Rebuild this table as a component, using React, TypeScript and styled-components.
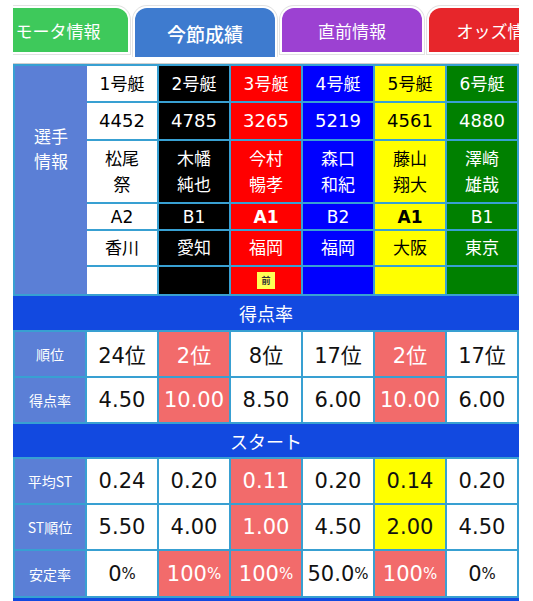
import React from "react";
import styled, { createGlobalStyle, css } from "styled-components";

const Global = createGlobalStyle`
  html, body { margin: 0; padding: 0; background: #fff; }
  body { font-family: "DejaVu Sans", "Noto Sans CJK JP", sans-serif; }
`;

const Page = styled.div`
  width: 506px;
  padding-left: 13px;
`;

const TabBar = styled.div`
  overflow: hidden;
  padding-top: 8px;
  height: 49px;
  margin-bottom: 7px;
`;

const TabTrack = styled.div`
  display: flex;
  align-items: flex-start;
  gap: 7px;
  margin-left: -25px;
`;

const Tab = styled.div<{ $bg: string; $active?: boolean }>`
  flex: 0 0 140px;
  height: ${(p) => (p.$active ? 49 : 44)}px;
  background: ${(p) => p.$bg};
  border-radius: 12px 12px 0 0;
  box-shadow: 0 0 0 2px #fff, 0 0 0 3px #e2e2e2;
  color: #fff;
  display: flex;
  align-items: center;
  justify-content: center;
  font-family: "Noto Sans CJK JP", sans-serif;
  font-size: ${(p) => (p.$active ? 19 : 17)}px;
  font-weight: ${(p) => (p.$active ? 500 : 400)};
  padding-top: ${(p) => (p.$active ? 2 : 0)}px;
  box-sizing: border-box;
  white-space: nowrap;
`;

const Table = styled.div`
  display: grid;
  grid-template-columns: repeat(7, 70px);
  grid-template-rows: 35px 36px 61px 25px 34px 27px 34px 44px 44px 33px 44px 44px 45px 34px;
  gap: 2px;
  padding: 2px;
  background: #38a0d2;
  box-shadow: 0 -1px 0 #cfcfcf;
`;

const SideLabel = styled.div`
  grid-row: 1 / span 6;
  background: #5b7fd6;
  color: #fff;
  display: flex;
  align-items: center;
  justify-content: center;
  text-align: center;
  font-family: "Noto Sans CJK JP", sans-serif;
  font-size: 17px;
  line-height: 25px;
  padding-bottom: 64px;
  margin-right: -2px;
`;

const RowLabel = styled.div`
  background: #5b7fd6;
  color: #fff;
  display: flex;
  align-items: center;
  justify-content: center;
  font-family: "Noto Sans CJK JP", sans-serif;
  font-size: 14px;
`;

const Section = styled.div`
  grid-column: 1 / -1;
  background: #1249e0;
  color: #fff;
  display: flex;
  align-items: center;
  justify-content: center;
  font-family: "Noto Sans CJK JP", sans-serif;
  font-size: 18px;
  margin: 0 -2px;
`;

const BoatCell = styled.div<{ $bg: string; $fg: string; $size?: number; $bold?: boolean }>`
  background: ${(p) => p.$bg};
  color: ${(p) => p.$fg};
  display: flex;
  flex-direction: column;
  align-items: center;
  justify-content: center;
  font-size: ${(p) => p.$size ?? 17}px;
  font-weight: ${(p) => (p.$bold ? 700 : 400)};
  line-height: 26px;
  text-align: center;
`;

const Badge = styled.span`
  display: inline-flex;
  align-items: center;
  justify-content: center;
  width: 18px;
  height: 17px;
  background: #ffff55;
  color: #333;
  font-family: "Noto Sans CJK JP", sans-serif;
  font-size: 9px;
  font-weight: 700;
  line-height: 1;
`;

type Tone = "plain" | "hot" | "gold";

const toneStyles = {
  plain: css`background: #fff; color: #111;`,
  hot: css`background: #f26b6b; color: #fff;`,
  gold: css`background: #ffff00; color: #111;`,
};

const StatCell = styled.div<{ $tone: Tone }>`
  ${(p) => toneStyles[p.$tone]}
  display: flex;
  align-items: center;
  justify-content: center;
  font-size: 21px;
  white-space: nowrap;
`;

const Pct = styled.span`
  font-size: 15px;
`;

const boats = [
  { no: "1号艇", bg: "#ffffff", fg: "#000", id: "4452", name: ["松尾", "祭"], cls: "A2", bold: false, area: "香川", badge: "" },
  { no: "2号艇", bg: "#000000", fg: "#fff", id: "4785", name: ["木幡", "純也"], cls: "B1", bold: false, area: "愛知", badge: "" },
  { no: "3号艇", bg: "#ff0000", fg: "#fff", id: "3265", name: ["今村", "暢孝"], cls: "A1", bold: true, area: "福岡", badge: "前" },
  { no: "4号艇", bg: "#0000ff", fg: "#fff", id: "5219", name: ["森口", "和紀"], cls: "B2", bold: false, area: "福岡", badge: "" },
  { no: "5号艇", bg: "#ffff00", fg: "#000", id: "4561", name: ["藤山", "翔大"], cls: "A1", bold: true, area: "大阪", badge: "" },
  { no: "6号艇", bg: "#008000", fg: "#fff", id: "4880", name: ["澤崎", "雄哉"], cls: "B1", bold: false, area: "東京", badge: "" },
];

type Stat = [string, Tone];

const pointRows: { label: string; values: Stat[] }[] = [
  { label: "順位", values: [["24位", "plain"], ["2位", "hot"], ["8位", "plain"], ["17位", "plain"], ["2位", "hot"], ["17位", "plain"]] },
  { label: "得点率", values: [["4.50", "plain"], ["10.00", "hot"], ["8.50", "plain"], ["6.00", "plain"], ["10.00", "hot"], ["6.00", "plain"]] },
];

const startRows: { label: string; values: Stat[] }[] = [
  { label: "平均ST", values: [["0.24", "plain"], ["0.20", "plain"], ["0.11", "hot"], ["0.20", "plain"], ["0.14", "gold"], ["0.20", "plain"]] },
  { label: "ST順位", values: [["5.50", "plain"], ["4.00", "plain"], ["1.00", "hot"], ["4.50", "plain"], ["2.00", "gold"], ["4.50", "plain"]] },
  { label: "安定率", values: [["0%", "plain"], ["100%", "hot"], ["100%", "hot"], ["50.0%", "plain"], ["100%", "hot"], ["0%", "plain"]] },
];

const renderValue = (v: string) =>
  v.endsWith("%") ? (
    <>
      {v.slice(0, -1)}
      <Pct>%</Pct>
    </>
  ) : (
    v
  );

const StatRows = ({ rows }: { rows: { label: string; values: Stat[] }[] }) => (
  <>
    {rows.map((r) => (
      <React.Fragment key={r.label}>
        <RowLabel>{r.label}</RowLabel>
        {r.values.map(([v, t], i) => (
          <StatCell key={i} $tone={t}>
            {renderValue(v)}
          </StatCell>
        ))}
      </React.Fragment>
    ))}
  </>
);

export default function App() {
  return (
    <Page>
      <Global />
      <TabBar>
        <TabTrack>
          <Tab $bg="#3ec95b">モータ情報</Tab>
          <Tab $bg="#3e7bcf" $active>
            今節成績
          </Tab>
          <Tab $bg="#9c41d2">直前情報</Tab>
          <Tab $bg="#e7262b">オッズ情報</Tab>
        </TabTrack>
      </TabBar>
      <Table>
        <SideLabel>
          選手
          <br />
          情報
        </SideLabel>
        {boats.map((b) => (
          <BoatCell key={b.no} $bg={b.bg} $fg={b.fg}>
            {b.no}
          </BoatCell>
        ))}
        {boats.map((b) => (
          <BoatCell key={b.id} $bg={b.bg} $fg={b.fg} $size={18}>
            {b.id}
          </BoatCell>
        ))}
        {boats.map((b) => (
          <BoatCell key={b.name.join()} $bg={b.bg} $fg={b.fg}>
            <span>{b.name[0]}</span>
            <span>{b.name[1]}</span>
          </BoatCell>
        ))}
        {boats.map((b, i) => (
          <BoatCell key={"c" + i} $bg={b.bg} $fg={b.fg} $bold={b.bold}>
            {b.cls}
          </BoatCell>
        ))}
        {boats.map((b, i) => (
          <BoatCell key={"a" + i} $bg={b.bg} $fg={b.fg}>
            {b.area}
          </BoatCell>
        ))}
        {boats.map((b, i) => (
          <BoatCell key={"b" + i} $bg={b.bg} $fg={b.fg}>
            {b.badge && <Badge>{b.badge}</Badge>}
          </BoatCell>
        ))}
        <Section>得点率</Section>
        <StatRows rows={pointRows} />
        <Section>スタート</Section>
        <StatRows rows={startRows} />
        <Section>モーター</Section>
      </Table>
    </Page>
  );
}
